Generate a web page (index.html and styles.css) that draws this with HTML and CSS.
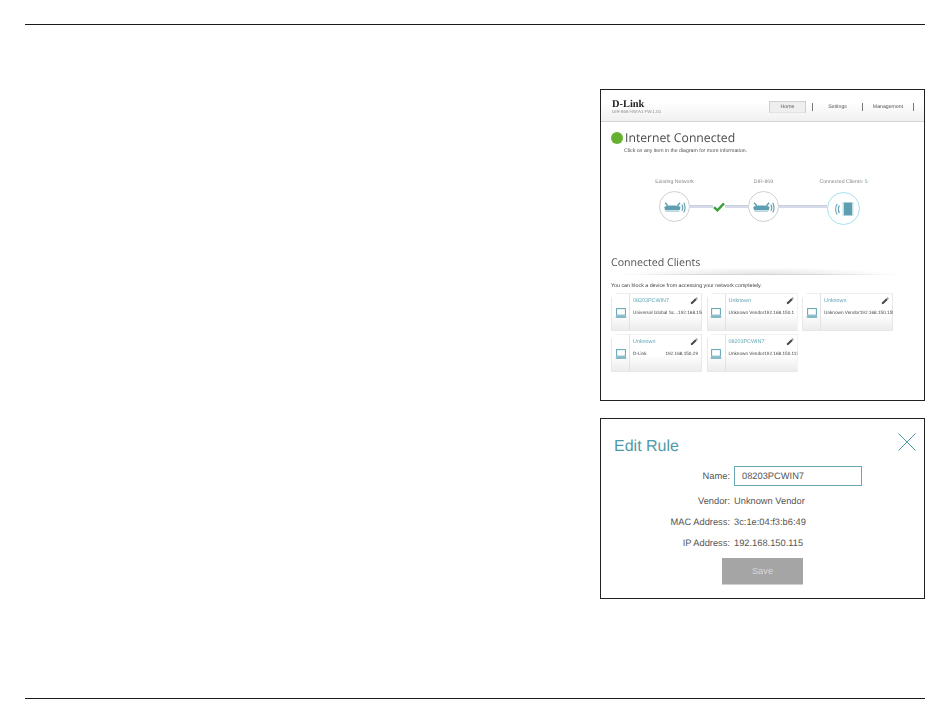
FILE: index.html
```html
<!DOCTYPE html>
<html lang="en">
<head>
<meta charset="utf-8">
<title>Edit Rule</title>
<link rel="stylesheet" href="styles.css">
</head>
<body>
<svg class="defs" width="0" height="0" aria-hidden="true">
  <symbol id="router" viewBox="0 0 31 31">
    <path d="M5.5 11.5 8.5 15M21.5 11.5 18.5 15" stroke="#5d9fb0" stroke-width="1.5" fill="none"/>
    <path d="M4.5 16.2C7 14 19.5 14 22 16.2L21 19.4H5.5Z" fill="#5d9fb0"/>
    <path d="M6 20.6H20.5" stroke="#9cc5cf" stroke-width="1"/>
    <path d="M23.4 13.5C24.6 15.5 24.6 18 23.4 20M25.4 11.5C27.2 15 27.2 18.5 25.4 22" stroke="#5d9fb0" stroke-width="1.2" fill="none"/>
  </symbol>
  <symbol id="laptop" viewBox="0 0 12 12">
    <rect x="1.6" y="1.6" width="8.8" height="6.6" fill="#fff" stroke="#5ea4b4" stroke-width="1"/>
    <path d="M.8 10H11.2" stroke="#5ea4b4" stroke-width="1.5"/>
  </symbol>
  <symbol id="pencil" viewBox="0 0 8 8">
    <path d="M.8 7.2 1.2 5.3 5.3 1.2 6.8 2.7 2.7 6.8Z" fill="#4a4a4a"/>
    <path d="M5.8.7 6.3.3 7.7 1.7 7.3 2.2Z" fill="#4a4a4a"/>
  </symbol>
</svg>
<div class="page">
  <div class="rule"></div>
  <main class="figures">
    <section class="panel panel-home">
      <header class="top">
        <div class="brand">
          <div class="logo">D-Link</div>
          <div class="model">DIR-869 HW:A1 FW:1.01</div>
        </div>
        <nav class="nav">
          <span class="tab">Home</span><span class="sep"></span>
          <span class="link link-settings">Settings</span><span class="sep"></span>
          <span class="link">Management</span><span class="sep"></span>
        </nav>
      </header>
      <div class="status">
        <span class="dot"></span>
        <h1 class="status-title">Internet Connected</h1>
      </div>
      <p class="status-note">Click on any item in the diagram for more information.</p>
      <div class="diagram">
        <div class="node">
          <div class="node-label">Existing Network</div>
          <div class="circle"><svg class="circle-icon"><use href="#router"/></svg></div>
        </div>
        <div class="wire wire-a">
          <svg class="check" viewBox="0 0 12 10"><path d="M1 5.2 4.4 8.4 11 1.4" fill="none" stroke="#3f9f3f" stroke-width="2.4"/></svg>
        </div>
        <div class="node">
          <div class="node-label">DIR-869</div>
          <div class="circle"><svg class="circle-icon"><use href="#router"/></svg></div>
        </div>
        <div class="wire wire-b"></div>
        <div class="node node-clients">
          <div class="node-label">Connected Clients: <span class="count">5</span></div>
          <div class="circle circle-active">
            <svg class="client-icon" viewBox="0 0 31 31">
              <path d="M11.5 12.5C10 14.5 10 18 11.5 20M9.2 11C7.2 14 7.2 18.5 9.2 21.5" stroke="#5d9fb0" stroke-width="1.2" fill="none"/>
              <rect x="16" y="9.5" width="8" height="13" fill="#5d9fb0"/>
              <path d="M15.2 9V23M24.8 9V23" stroke="#9cc5cf" stroke-width=".8"/>
            </svg>
          </div>
        </div>
      </div>
      <h2 class="section-title">Connected Clients</h2>
      <div class="section-line"></div>
      <p class="section-note">You can block a device from accessing your network completely.</p>
      <div class="cards">
        <article class="card">
          <div class="card-icon"><svg class="laptop"><use href="#laptop"/></svg></div>
          <div class="card-body">
            <div class="card-head"><span class="card-name">08203PCWIN7</span><svg class="pencil"><use href="#pencil"/></svg></div>
            <div class="card-row"><span>Universal Global Sc...</span><span>192.168.150.58</span></div>
          </div>
        </article>
        <article class="card">
          <div class="card-icon"><svg class="laptop"><use href="#laptop"/></svg></div>
          <div class="card-body">
            <div class="card-head"><span class="card-name">Unknown</span><svg class="pencil"><use href="#pencil"/></svg></div>
            <div class="card-row"><span>Unknown Vendor</span><span>192.168.150.1</span></div>
          </div>
        </article>
        <article class="card">
          <div class="card-icon"><svg class="laptop"><use href="#laptop"/></svg></div>
          <div class="card-body">
            <div class="card-head"><span class="card-name">Unknown</span><svg class="pencil"><use href="#pencil"/></svg></div>
            <div class="card-row"><span>Unknown Vendor</span><span>192.168.150.155</span></div>
          </div>
        </article>
        <article class="card">
          <div class="card-icon"><svg class="laptop"><use href="#laptop"/></svg></div>
          <div class="card-body">
            <div class="card-head"><span class="card-name">Unknown</span><svg class="pencil"><use href="#pencil"/></svg></div>
            <div class="card-row"><span>D-Link</span><span>192.168.150.29</span></div>
          </div>
        </article>
        <article class="card">
          <div class="card-icon"><svg class="laptop"><use href="#laptop"/></svg></div>
          <div class="card-body">
            <div class="card-head"><span class="card-name">08203PCWIN7</span><svg class="pencil"><use href="#pencil"/></svg></div>
            <div class="card-row"><span>Unknown Vendor</span><span>192.168.150.115</span></div>
          </div>
        </article>
      </div>
    </section>
    <section class="panel panel-edit">
      <div class="edit-head">
        <h2 class="edit-title">Edit Rule</h2>
        <svg class="close" viewBox="0 0 18 18"><path d="M.5.5 17.5 17.5M17.5.5.5 17.5" stroke="#4f9aa9" stroke-width="1" fill="none"/></svg>
      </div>
      <div class="form">
        <span class="label label-name">Name:</span><div class="input">08203PCWIN7</div>
        <span class="label">Vendor:</span><span class="value">Unknown Vendor</span>
        <span class="label">MAC Address:</span><span class="value">3c:1e:04:f3:b6:49</span>
        <span class="label">IP Address:</span><span class="value">192.168.150.115</span>
      </div>
      <div class="actions"><button class="save" type="button">Save</button></div>
    </section>
  </main>
  <div class="rule rule-bottom"></div>
</div>
</body>
</html>
```
FILE: styles.css
```css
* { box-sizing: border-box; }
html, body { margin: 0; padding: 0; background: #fff; }
body { font-family: "Liberation Sans", Arial, sans-serif; color: #444; overflow: hidden; text-rendering: geometricPrecision; }
h1, h2, p { margin: 0; font-weight: normal; }
.defs { position: absolute; }
.page { width: 950px; height: 725px; padding: 24px 25px 26px; display: flex; flex-direction: column; }
.rule { height: 1px; background: #1a1a1a; flex: none; }
.rule-bottom { margin-top: auto; }
.figures { display: flex; flex-direction: column; align-items: flex-end; margin-top: 64px; gap: 17px; }
.panel { width: 325px; border: 1px solid #222; background: #fff; }
.panel-home { height: 312px; }
.panel-home > * { filter: blur(.25px); }
.panel-edit { height: 181px; padding: 0 8px 0 13px; }

/* header */
.top { height: 32px; padding: 8px 10px 0 11px; display: flex; justify-content: space-between; border-bottom: 1px solid #d4d4d4; background: linear-gradient(#fff 40%, #f0f0f0); }
.logo { font: bold 10.4px/9px "Liberation Serif", serif; color: #222; margin-top: 2px; }
.model { font-size: 4.4px; line-height: 6px; color: #888; }
.nav { display: flex; align-items: center; height: 12px; margin-top: 3px; font-size: 5.2px; color: #555; }
.tab { width: 37px; height: 12px; line-height: 11px; text-align: center; background: #efefef; border: 1px solid #cfcfcf; border-bottom-color: #e2e2e2; margin-right: 6px; }
.sep { width: 1px; height: 8px; background: #777; flex: none; }
.link { width: 50px; text-align: center; }
.link-settings { width: 49px; }

/* status */
.status { display: flex; align-items: center; gap: 2px; padding-left: 10px; margin-top: 8px; }
.dot { width: 12px; height: 12px; border-radius: 50%; background: #65b12f; flex: none; }
.status-title { font: 12.2px/16px "Open Sans", sans-serif; color: #4a4a4a; }
.status-note { font-size: 5.2px; line-height: 7px; padding-left: 23px; margin-top: 2px; color: #555; }

/* diagram */
.diagram { display: flex; align-items: flex-end; margin: 21px 0 0 58px; height: 46px; }
.node { width: 31px; flex: none; display: flex; flex-direction: column; align-items: center; }
.node-label { font-size: 5.2px; line-height: 7px; color: #888; white-space: nowrap; margin-bottom: 5px; }
.count { color: #4f9aa9; }
.circle { width: 31px; height: 31px; border-radius: 50%; border: 1px solid #cfcfcf; background: #fff; display: flex; }
.circle-icon { width: 29px; height: 29px; }
.node-clients { width: 33px; margin-bottom: -3px; }
.node-clients .node-label { margin-bottom: 6px; }
.circle-active { width: 33px; height: 33px; border-color: #a5e0ec; }
.client-icon { width: 31px; height: 31px; }
.wire { height: 3px; margin-bottom: 14px; flex: none; background: #d5dbe8; border-top: 1px solid #c8cede; display: flex; justify-content: center; align-items: center; }
.wire-a { width: 58px; }
.wire-b { width: 48px; }
.check { width: 12px; height: 10px; background: #fff; }

/* clients */
.section-title { font: 10.6px/14px "Open Sans", sans-serif; color: #4f4f4f; padding-left: 10px; margin-top: 34px; }
.section-line { height: 8px; margin: -3px 24px 0 18px; border-bottom: 1px solid transparent; border-image: linear-gradient(90deg, #fff, #d6d6d6 30%, #d6d6d6 70%, #fff) 1; background: radial-gradient(ellipse at 50% 100%, #e4e4e4, #fff 65%); }
.section-note { font-size: 5.3px; line-height: 7px; padding-left: 10px; margin-top: 8px; color: #444; }
.cards { display: grid; grid-template-columns: repeat(3, 91px); gap: 3px 4.5px; padding-left: 10px; margin-top: 3px; }
.card { height: 38px; display: flex; background: linear-gradient(#fff 55%, #ececec); border: 1px solid #e8e8e8; border-top-color: #efefef; clip-path: polygon(5px 0, 100% 0, 100% 100%, 0 100%, 0 5px); }
.card-icon { width: 18px; flex: none; border-right: 1px solid #e2e2e2; display: flex; align-items: center; justify-content: center; padding-top: 1px; }
.laptop { width: 12px; height: 12px; }
.card-body { flex: 1; min-width: 0; padding: 2px 3px 0 3px; }
.card-head { height: 9px; display: flex; justify-content: space-between; align-items: center; }
.card-name { font-size: 5.4px; color: #5ea4b4; }
.pencil { width: 8px; height: 8px; }
.card-row { display: flex; justify-content: space-between; margin-top: 4px; font-size: 4.7px; line-height: 7px; color: #444; white-space: nowrap; }

/* edit rule */
.edit-head { display: flex; justify-content: space-between; align-items: flex-start; }
.edit-title { font-size: 16px; line-height: 18px; color: #4f9aa9; margin-top: 19px; }
.close { width: 18px; height: 18px; margin-top: 14px; }
.form { display: grid; grid-template-columns: 116px auto; column-gap: 4px; grid-template-rows: 24px 21px 21px 21px; justify-content: start; margin-top: 10px; font-size: 9.3px; color: #555; align-items: center; }
.label { text-align: right; }
.label-name { align-self: start; line-height: 20px; }
.input { width: 128px; height: 20px; border: 1px solid #6aa8b4; padding-left: 7px; line-height: 18px; align-self: start; }
.actions { padding-left: 108px; margin-top: 5px; }
.save { display: block; width: 81px; height: 27px; border: 0; border-bottom: 1px solid #d0d0d0; background: #a5a5a5; color: #d8d8d8; font: 9.3px "Liberation Sans", Arial, sans-serif; padding: 0; }
```
